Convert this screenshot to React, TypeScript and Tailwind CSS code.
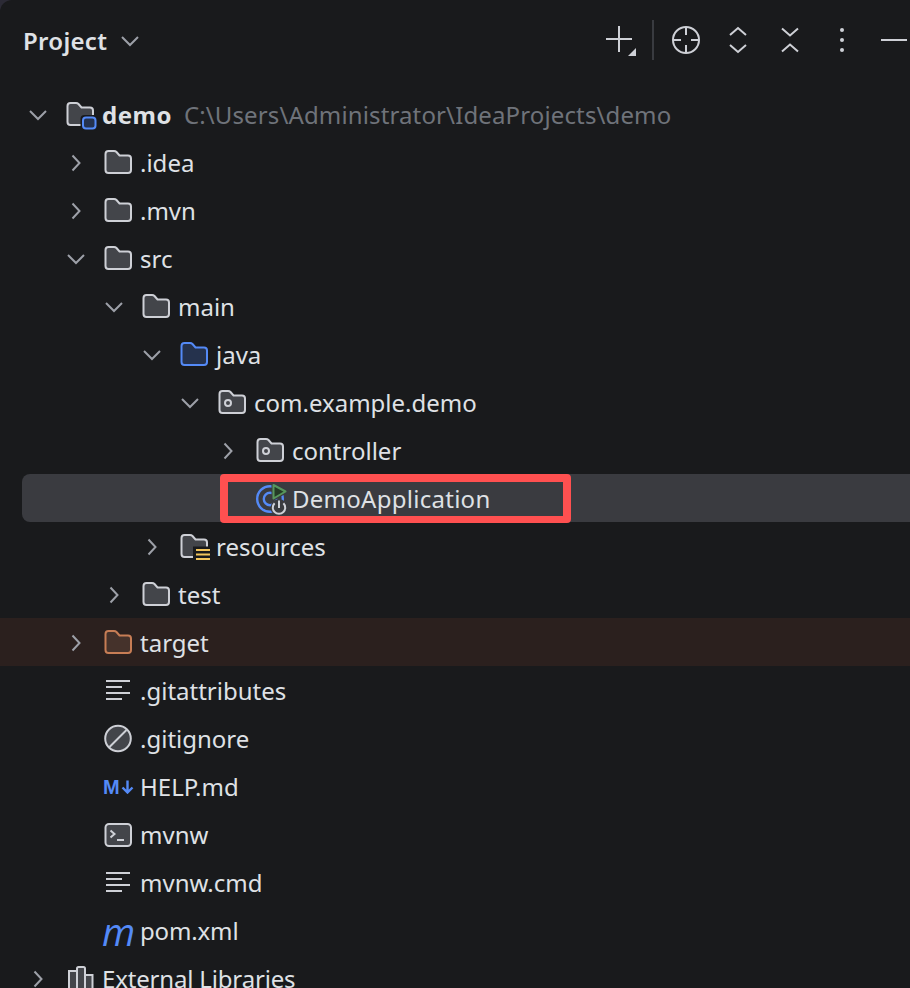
import type { ReactNode } from "react";

// folder outline shared by the tree icons
const FOLDER =
  "M1.5 5 Q1.5 2 4.5 2 H10 Q11.5 2 12.5 3 L15.5 6.5 H24 Q27 6.5 27 9.5 V21 Q27 24 24 24 H4.5 Q1.5 24 1.5 21 Z";

function Icon({ children }: { children: ReactNode }) {
  return (
    <svg className="overflow-visible" width="28" height="28" viewBox="0 0 28 28" fill="none">
      {children}
    </svg>
  );
}

function Folder({ stroke = "#ced0d6", fill = "#43454a" }: { stroke?: string; fill?: string }) {
  return <path d={FOLDER} stroke={stroke} fill={fill} strokeWidth="2" />;
}

const folderIcon = (
  <Icon>
    <Folder />
  </Icon>
);

const projectIcon = (
  <Icon>
    <Folder />
    <rect x="14.5" y="14" width="17.5" height="16" rx="4" fill="#191a1c" />
    <rect x="17" y="16.5" width="12.5" height="11" rx="3" fill="#25324d" stroke="#548af7" strokeWidth="2" />
  </Icon>
);

const javaIcon = (
  <Icon>
    <Folder stroke="#548af7" fill="#25324d" />
  </Icon>
);

const packageIcon = (
  <Icon>
    <Folder />
    <circle cx="10" cy="14" r="3" stroke="#ced0d6" strokeWidth="2" />
  </Icon>
);

const resourcesIcon = (
  <Icon>
    <Folder />
    <rect x="13" y="13.5" width="18" height="15" fill="#191a1c" />
    <path d="M16 17 H30 M16 21.5 H30 M16 26 H30" stroke="#f2c55c" strokeWidth="2" />
  </Icon>
);

const targetIcon = (
  <Icon>
    <Folder stroke="#c77d55" fill="#45322b" />
  </Icon>
);

const linesIcon = (
  <Icon>
    <path d="M2 4 H26 M2 10 H18 M2 16 H26 M2 22 H18" stroke="#ced0d6" strokeWidth="2" />
  </Icon>
);

const ignoreIcon = (
  <Icon>
    <circle cx="14" cy="13.5" r="12.8" fill="#43454a" stroke="#ced0d6" strokeWidth="2" />
    <path d="M5.5 22 L22.5 5" stroke="#ced0d6" strokeWidth="2" />
  </Icon>
);

const markdownIcon = (
  <span className="-ml-[1px] flex w-[32px] items-center font-['Liberation_Sans',sans-serif] text-[20px] leading-none font-bold text-[#548af7]">
    M
    <svg className="ml-[1px]" width="13" height="14" viewBox="0 0 13 14" fill="none">
      <path d="M6.5 0.5 V12.5 M1.5 7.5 L6.5 12.5 L11.5 7.5" stroke="#548af7" strokeWidth="2.4" />
    </svg>
  </span>
);

const terminalIcon = (
  <Icon>
    <rect x="1.5" y="3" width="25.5" height="22" rx="3.5" fill="#43454a" stroke="#ced0d6" strokeWidth="2" />
    <path d="M6.5 9.5 L10.5 13 L6.5 16.5 M13 19 H20" stroke="#ced0d6" strokeWidth="2" />
  </Icon>
);

const mavenIcon = (
  <span className="-ml-[2px] block w-7 text-center font-['Open_Sans',sans-serif] text-[38px] leading-[28px] font-medium italic text-[#548af7]">
    m
  </span>
);

const librariesIcon = (
  <Icon>
    <path
      d="M3 27 V6 H11 V27 Z M11 27 V3.5 Q11 2 12.5 2 H17.5 Q19 2 19 3.5 V27 Z M19 27 V10 H26.5 V27 Z"
      fill="#43454a"
      stroke="#ced0d6"
      strokeWidth="2"
    />
  </Icon>
);

const springIcon = (
  <Icon>
    <circle cx="14" cy="14" r="12.8" stroke="#548af7" strokeWidth="2.4" />
    <circle cx="14" cy="14" r="6.2" stroke="#548af7" strokeWidth="2.4" />
    <path d="M17.5 0 L29.5 6.5 L17.5 13.5 Z" fill="#3a3b40" stroke="#3a3b40" strokeWidth="4" strokeLinejoin="round" />
    <path d="M17.5 0 L29.5 6.5 L17.5 13.5 Z" fill="#253a26" stroke="#57965c" strokeWidth="2" strokeLinejoin="round" />
    <circle cx="23" cy="22.7" r="8.5" fill="#3a3b40" />
    <path d="M18.6 18.3 A6.2 6.2 0 1 0 27.4 18.3 M23 15.5 V23" stroke="#ced0d6" strokeWidth="2" />
  </Icon>
);

function Chevron({ open }: { open?: boolean }) {
  return (
    <svg width="28" height="28" viewBox="0 0 28 28" fill="none">
      <path
        d={open ? "M6 10 L14 18 L22 10" : "M10.5 6.5 L17.5 14 L10.5 21.5"}
        stroke="#9da0a8"
        strokeWidth="2"
      />
    </svg>
  );
}

type RowProps = {
  indent: string;
  open?: boolean;
  leaf?: boolean;
  icon: ReactNode;
  label: string;
  hint?: string;
  labelClass?: string;
  rowClass?: string;
};

function Row({ indent, open, leaf, icon, label, hint, labelClass, rowClass }: RowProps) {
  return (
    <div className={`flex h-12 shrink-0 items-center pt-[2px] ${indent} ${rowClass ?? ""}`}>
      <span className="w-7 shrink-0">{!leaf && <Chevron open={open} />}</span>
      <span className="ml-[14px] flex w-7 shrink-0 items-center">{icon}</span>
      <span className={`ml-2 whitespace-nowrap text-[#dfe1e5] ${labelClass ?? ""}`}>{label}</span>
      {hint && <span className="ml-3 whitespace-nowrap tracking-[0.13px] text-[#6f737a]">{hint}</span>}
    </div>
  );
}

export default function App() {
  return (
    <div className="h-[988px] w-[910px] overflow-hidden bg-[#2b2a35] font-['Noto_Sans',sans-serif] text-[24px]">
      <div className="flex h-full flex-col rounded-tl-[12px] bg-[#191a1c]">
        <header className="flex h-[90px] shrink-0 items-start pr-[2px] pl-[23px]">
          <div className="flex h-[82px] flex-1 items-center">
            <span className="font-semibold tracking-[0.3px] text-[#dfe1e5]">Project</span>
            <svg className="ml-3" width="22" height="20" viewBox="0 0 22 20" fill="none">
              <path d="M3 6 L11 14 L19 6" stroke="#9da0a8" strokeWidth="2" />
            </svg>
          </div>
          <div className="flex h-[80px] items-center">
            <svg className="overflow-visible" width="28" height="28" viewBox="0 0 28 28" fill="none">
              <path d="M0 13 H26 M13 0 V26" stroke="#ced0d6" strokeWidth="2" />
              <path d="M30 22 V30 H22 Z" fill="#ced0d6" />
            </svg>
            <span className="mx-[18px] h-10 w-[2px] bg-[#393b40]" />
            <div className="flex items-center gap-6">
              <Icon>
                <circle cx="14" cy="14" r="13" stroke="#ced0d6" strokeWidth="2" />
                <path d="M14 1 V9 M14 19 V27 M1 14 H9 M19 14 H27" stroke="#ced0d6" strokeWidth="2" />
              </Icon>
              <Icon>
                <path d="M6 9 L14 2 L22 9 M6 19 L14 26 L22 19" stroke="#ced0d6" strokeWidth="2" />
              </Icon>
              <Icon>
                <path d="M6 2.5 L14 9.5 L22 2.5 M6 25.5 L14 18.5 L22 25.5" stroke="#ced0d6" strokeWidth="2" />
              </Icon>
              <Icon>
                <circle cx="14" cy="4" r="2" fill="#ced0d6" />
                <circle cx="14" cy="14" r="2" fill="#ced0d6" />
                <circle cx="14" cy="24" r="2" fill="#ced0d6" />
              </Icon>
              <Icon>
                <path d="M1 14 H27" stroke="#ced0d6" strokeWidth="2" />
              </Icon>
            </div>
          </div>
        </header>

        <Row indent="pl-6" open icon={projectIcon} label="demo" labelClass="font-bold tracking-[0.5px]" hint={"C:\\Users\\Administrator\\IdeaProjects\\demo"} />
        <Row indent="pl-[62px]" icon={folderIcon} label=".idea" />
        <Row indent="pl-[62px]" icon={folderIcon} label=".mvn" />
        <Row indent="pl-[62px]" open icon={folderIcon} label="src" />
        <Row indent="pl-[100px]" open icon={folderIcon} label="main" />
        <Row indent="pl-[138px]" open icon={javaIcon} label="java" />
        <Row indent="pl-[176px]" open icon={packageIcon} label="com.example.demo" />
        <Row indent="pl-[214px]" icon={packageIcon} label="controller" />
        <div className="relative ml-[22px] shrink-0 rounded-l-[8px] bg-[#3a3b40]">
          <Row indent="pl-[192px]" leaf icon={springIcon} label="DemoApplication" labelClass="tracking-[0.27px]" />
          <div className="absolute top-0 left-[198px] h-[49px] w-[351px] rounded-[4px] border-x-8 border-t-8 border-b-[7px] border-[#ff5050]" />
        </div>
        <Row indent="pl-[138px]" icon={resourcesIcon} label="resources" />
        <Row indent="pl-[100px]" icon={folderIcon} label="test" />
        <Row indent="pl-[62px]" icon={targetIcon} label="target" rowClass="bg-[#2b201e]" />
        <Row indent="pl-[62px]" leaf icon={linesIcon} label=".gitattributes" />
        <Row indent="pl-[62px]" leaf icon={ignoreIcon} label=".gitignore" />
        <Row indent="pl-[62px]" leaf icon={markdownIcon} label="HELP.md" />
        <Row indent="pl-[62px]" leaf icon={terminalIcon} label="mvnw" />
        <Row indent="pl-[62px]" leaf icon={linesIcon} label="mvnw.cmd" />
        <Row indent="pl-[62px]" leaf icon={mavenIcon} label="pom.xml" labelClass="tracking-[-0.15px]" />
        <Row indent="pl-6" icon={librariesIcon} label="External Libraries" labelClass="tracking-[-0.17px]" />
      </div>
    </div>
  );
}
